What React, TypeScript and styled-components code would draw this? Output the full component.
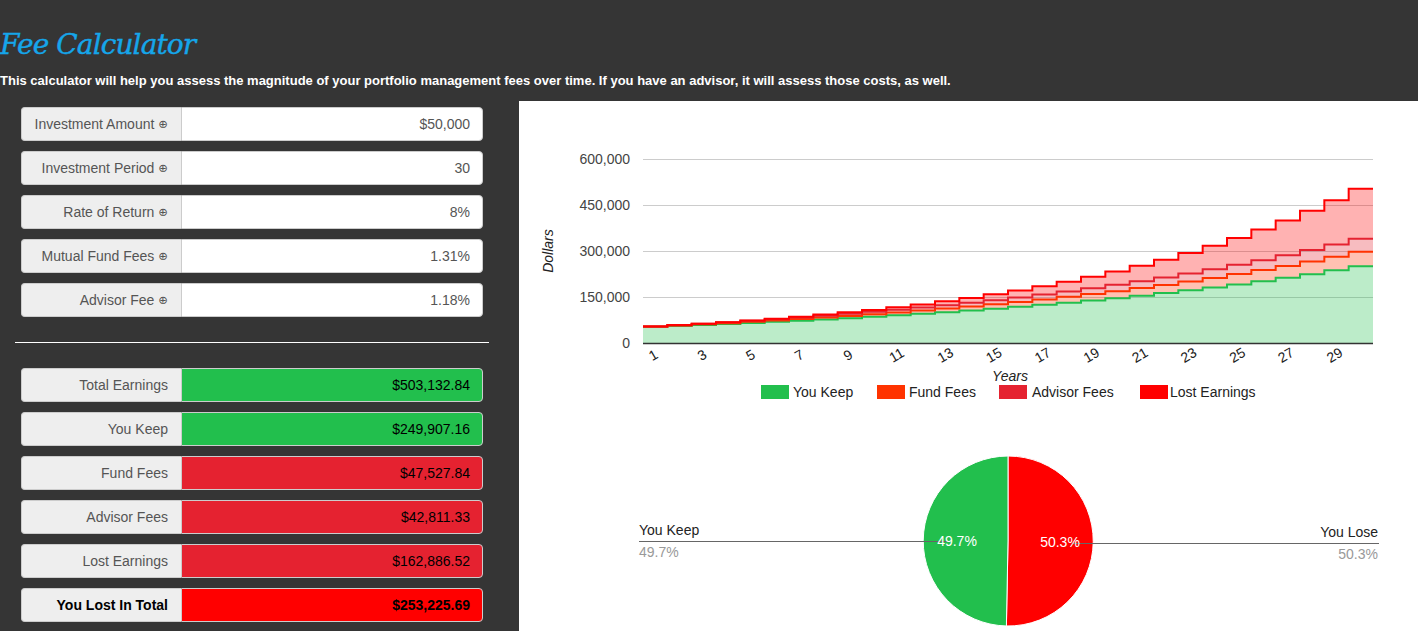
import React from "react";
import styled, { createGlobalStyle } from "styled-components";

const GlobalStyle = createGlobalStyle`
  html, body {
    margin: 0;
    padding: 0;
    background: #353535;
    overflow: hidden;
  }
  body {
    font-family: "Liberation Sans", Arial, Helvetica, sans-serif;
  }
`;

const Page = styled.div`
  width: 1418px;
  min-height: 631px;
  background: #353535;
`;

const Header = styled.header`
  padding-top: 27px;
`;

const Title = styled.h1`
  margin: 0;
  font-family: "DejaVu Serif", Georgia, serif;
  font-style: italic;
  font-weight: normal;
  font-size: 28px;
  letter-spacing: -0.9px;
  line-height: 36px;
  color: #15a6ea;
  -webkit-text-stroke: 0.4px #15a6ea;
`;

const Intro = styled.p`
  margin: 9px 0 0;
  font-size: 13px;
  font-weight: bold;
  line-height: 18px;
  color: #ffffff;
`;

const Main = styled.main`
  display: flex;
  gap: 15px;
  margin-top: 11px;
`;

const LeftColumn = styled.section`
  width: 504px;
  box-sizing: border-box;
  padding: 6px 15px 0;
`;

const FieldList = styled.div`
  display: flex;
  flex-direction: column;
  gap: 10px;
  padding: 0 6px;
`;

const FieldRow = styled.div`
  display: flex;
  height: 34px;
  font-size: 14px;
`;

const FieldLabel = styled.div<{ $strong?: boolean }>`
  width: 160px;
  box-sizing: border-box;
  display: flex;
  align-items: center;
  justify-content: flex-end;
  gap: 4px;
  padding: 0 13px 0 8px;
  background: #eeeeee;
  border: 1px solid #cccccc;
  border-right: none;
  border-radius: 4px 0 0 4px;
  color: ${(p) => (p.$strong ? "#000000" : "#555555")};
  font-weight: ${(p) => (p.$strong ? "bold" : "normal")};
`;

const InfoMark = styled.span`
  font-family: "DejaVu Sans", sans-serif;
  font-size: 11.5px;
  color: #555555;
`;

type Tone = "plain" | "good" | "bad" | "worst";

const toneBg: Record<Tone, string> = {
  plain: "#ffffff",
  good: "#22bf4d",
  bad: "#e52230",
  worst: "#ff0000",
};

const FieldValue = styled.div<{ $tone: Tone; $strong?: boolean }>`
  flex: 1;
  box-sizing: border-box;
  display: flex;
  align-items: center;
  justify-content: flex-end;
  padding: 0 12px;
  background: ${(p) => toneBg[p.$tone]};
  border: 1px solid #cccccc;
  border-radius: 0 4px 4px 0;
  color: ${(p) => (p.$tone === "plain" ? "#555555" : "#000000")};
  font-weight: ${(p) => (p.$strong ? "bold" : "normal")};
`;

const Divider = styled.hr`
  margin: 25px 0;
  border: none;
  border-top: 1px solid #ffffff;
`;

const RightPanel = styled.section`
  flex: 1;
  background: #ffffff;
  display: flex;
  flex-direction: column;
`;

const ChartSvg = styled.svg`
  display: block;
  font-family: "Liberation Sans", Arial, sans-serif;
`;

const inputs = [
  { label: "Investment Amount", value: "$50,000" },
  { label: "Investment Period", value: "30" },
  { label: "Rate of Return", value: "8%" },
  { label: "Mutual Fund Fees", value: "1.31%" },
  { label: "Advisor Fee", value: "1.18%" },
];

const outputs: { label: string; value: string; tone: Tone; strong?: boolean }[] = [
  { label: "Total Earnings", value: "$503,132.84", tone: "good" },
  { label: "You Keep", value: "$249,907.16", tone: "good" },
  { label: "Fund Fees", value: "$47,527.84", tone: "bad" },
  { label: "Advisor Fees", value: "$42,811.33", tone: "bad" },
  { label: "Lost Earnings", value: "$162,886.52", tone: "bad" },
  { label: "You Lost In Total", value: "$253,225.69", tone: "worst", strong: true },
];

// ---------- chart data ----------
const YEARS = 30;
const P = 50000;
const net = 1.08 - 0.0131 - 0.0118;
const series = Array.from({ length: YEARS }, (_, k) => {
  const n = k + 1;
  const keep = P * Math.pow(net, n);
  const base = (P * (Math.pow(net, n) - 1)) / (net - 1);
  const fund = 0.0131 * base;
  const adv = 0.0118 * base;
  const total = P * Math.pow(1.08, n);
  return [keep, keep + fund, keep + fund + adv, total];
});

const L = 124;
const R = 854;
const B = 242;
const step = (R - L) / YEARS;
const yOf = (v: number) => B - (v * 184) / 600000;

const stepLine = (idx: number) => {
  let d = "";
  for (let i = 0; i < YEARS; i++) {
    const y = yOf(series[i][idx]).toFixed(2);
    const x0 = (L + i * step).toFixed(2);
    const x1 = (L + (i + 1) * step).toFixed(2);
    d += i === 0 ? `M${x0},${y}` : `L${x0},${y}`;
    d += `L${x1},${y}`;
  }
  return d;
};

const stepArea = (lo: number, hi: number) => {
  let d = "";
  for (let i = 0; i < YEARS; i++) {
    const y = yOf(series[i][hi]).toFixed(2);
    const x0 = (L + i * step).toFixed(2);
    const x1 = (L + (i + 1) * step).toFixed(2);
    d += i === 0 ? `M${x0},${y}` : `L${x0},${y}`;
    d += `L${x1},${y}`;
  }
  for (let i = YEARS - 1; i >= 0; i--) {
    const y = lo < 0 ? B : Number(yOf(series[i][lo]).toFixed(2));
    const x0 = (L + i * step).toFixed(2);
    const x1 = (L + (i + 1) * step).toFixed(2);
    d += `L${x1},${y}L${x0},${y}`;
  }
  return d + "Z";
};

const colors = ["#22bf4d", "#ff3300", "#e52230", "#ff0000"];
const legend = [
  { label: "You Keep", sx: 242, tx: 274 },
  { label: "Fund Fees", sx: 358, tx: 390 },
  { label: "Advisor Fees", sx: 480, tx: 513 },
  { label: "Lost Earnings", sx: 621, tx: 651 },
];

const gridVals = [600000, 450000, 300000, 150000];

const AreaChart: React.FC = () => (
  <ChartSvg width={899} height={310} viewBox="0 0 899 310">
    {gridVals.map((v) => (
      <g key={v}>
        <line x1={L} x2={R} y1={yOf(v) + 0.5} y2={yOf(v) + 0.5} stroke="#cccccc" strokeWidth={1} />
        <text x={111} y={yOf(v) + 5} textAnchor="end" fontSize={14} fill="#444444">
          {v.toLocaleString("en-US")}
        </text>
      </g>
    ))}
    <text x={111} y={B + 5} textAnchor="end" fontSize={14} fill="#444444">
      0
    </text>
    {[0, 1, 2, 3].map((k) => (
      <path key={`a${k}`} d={stepArea(k - 1, k)} fill={colors[k]} fillOpacity={0.3} stroke="none" />
    ))}
    {[0, 1, 2, 3].map((k) => (
      <path key={`l${k}`} d={stepLine(k)} fill="none" stroke={colors[k]} strokeWidth={2} />
    ))}
    <line x1={L} x2={R} y1={B + 0.5} y2={B + 0.5} stroke="#333333" strokeWidth={1.5} />
    {Array.from({ length: 15 }, (_, j) => {
      const yr = j * 2 + 1;
      const cx = L + (yr - 0.5) * step - 2;
      return (
        <text
          key={yr}
          x={cx}
          y={259}
          textAnchor="middle"
          fontSize={14}
          fill="#222222"
          transform={`rotate(-30 ${cx} 254)`}
        >
          {yr}
        </text>
      );
    })}
    <text x={491} y={280} textAnchor="middle" fontSize={14} fontStyle="italic" fill="#222222">
      Years
    </text>
    <text
      x={34}
      y={150}
      textAnchor="middle"
      fontSize={14}
      fontStyle="italic"
      fill="#222222"
      transform="rotate(-90 34 150)"
    >
      Dollars
    </text>
    {legend.map((item, k) => (
      <g key={item.label}>
        <rect x={item.sx} y={284} width={28} height={14} fill={colors[k]} />
        <text x={item.tx} y={296} fontSize={14} fill="#222222">
          {item.label}
        </text>
      </g>
    ))}
  </ChartSvg>
);

const PCX = 489;
const PCY = 130;
const PR = 85;
const ang = (50.3 / 100) * 2 * Math.PI;
const ex = PCX + PR * Math.sin(ang);
const ey = PCY - PR * Math.cos(ang);

const PieChart: React.FC = () => (
  <ChartSvg width={899} height={220} viewBox="0 0 899 220">
    <path
      d={`M${PCX},${PCY}L${PCX},${PCY - PR}A${PR},${PR} 0 1 1 ${ex.toFixed(2)},${ey.toFixed(2)}Z`}
      fill="#ff0000"
      stroke="#ffffff"
      strokeWidth={1}
    />
    <path
      d={`M${PCX},${PCY}L${ex.toFixed(2)},${ey.toFixed(2)}A${PR},${PR} 0 0 1 ${PCX},${PCY - PR}Z`}
      fill="#22bf4d"
      stroke="#ffffff"
      strokeWidth={1}
    />
    <line x1={120} x2={429} y1={130.5} y2={130.5} stroke="#666666" strokeWidth={1} />
    <line x1={553} x2={860} y1={132.5} y2={132.5} stroke="#666666" strokeWidth={1} />
    <text x={120} y={124} fontSize={14} fill="#222222">
      You Keep
    </text>
    <text x={120} y={146} fontSize={14} fill="#999999">
      49.7%
    </text>
    <text x={859} y={126} textAnchor="end" fontSize={14} fill="#222222">
      You Lose
    </text>
    <text x={859} y={148} textAnchor="end" fontSize={14} fill="#999999">
      50.3%
    </text>
    <text x={438} y={135} textAnchor="middle" fontSize={14} fill="#ffffff">
      49.7%
    </text>
    <text x={541} y={136} textAnchor="middle" fontSize={14} fill="#ffffff">
      50.3%
    </text>
  </ChartSvg>
);

export default function App() {
  return (
    <Page>
      <GlobalStyle />
      <Header>
        <Title>Fee Calculator</Title>
        <Intro>
          This calculator will help you assess the magnitude of your portfolio management fees over time. If you
          have an advisor, it will assess those costs, as well.
        </Intro>
      </Header>
      <Main>
        <LeftColumn>
          <FieldList>
            {inputs.map((f) => (
              <FieldRow key={f.label}>
                <FieldLabel>
                  {f.label} <InfoMark>⊕</InfoMark>
                </FieldLabel>
                <FieldValue $tone="plain">{f.value}</FieldValue>
              </FieldRow>
            ))}
          </FieldList>
          <Divider />
          <FieldList>
            {outputs.map((f) => (
              <FieldRow key={f.label}>
                <FieldLabel $strong={f.strong}>{f.label}</FieldLabel>
                <FieldValue $tone={f.tone} $strong={f.strong}>
                  {f.value}
                </FieldValue>
              </FieldRow>
            ))}
          </FieldList>
        </LeftColumn>
        <RightPanel>
          <AreaChart />
          <PieChart />
        </RightPanel>
      </Main>
    </Page>
  );
}
